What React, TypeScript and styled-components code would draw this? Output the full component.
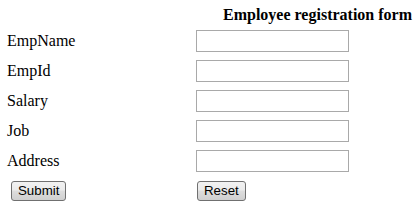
import React from "react";
import styled, { createGlobalStyle } from "styled-components";

const GlobalStyle = createGlobalStyle`
  html, body {
    margin: 0;
    padding: 0;
    background: #fff;
    font-family: "Liberation Serif", "Times New Roman", serif;
    color: #000;
  }
`;

const fields = ["EmpName", "EmpId", "Salary", "Job", "Address"];

const App: React.FC = () => {
  return (
    <>
      <GlobalStyle />
      <Form onSubmit={(e) => e.preventDefault()}>
        <Blank />
        <Title>Employee registration form</Title>
        {fields.map((name) => (
          <React.Fragment key={name}>
            <Label htmlFor={name}>{name}</Label>
            <Cell>
              <TextInput id={name} type="text" />
            </Cell>
          </React.Fragment>
        ))}
        <ButtonCell $offset={4}>
          <Button type="submit">Submit</Button>
        </ButtonCell>
        <ButtonCell $offset={1}>
          <Button type="reset">Reset</Button>
        </ButtonCell>
      </Form>
    </>
  );
};

const Form = styled.form`
  display: grid;
  grid-template-columns: 189px 1fr;
  grid-auto-rows: 22px;
  row-gap: 8px;
  align-items: center;
  padding: 0 0 0 7px;
  margin: 0;
  width: 413px;
  box-sizing: border-box;
`;

const Blank = styled.div``;

const Title = styled.div`
  align-self: start;
  margin-top: 5px;
  padding-left: 27px;
  font-size: 16px;
  line-height: 20px;
  font-weight: bold;
  white-space: nowrap;
`;

const Label = styled.label`
  font-size: 16px;
  line-height: 20px;
`;

const Cell = styled.div`
  display: flex;
  align-items: center;
`;

const TextInput = styled.input`
  width: 153px;
  height: 22px;
  box-sizing: border-box;
  border: 1px solid #a9a9a9;
  padding: 1px 2px;
  margin: 0;
  outline: none;
  font-family: "Liberation Sans", Arial, sans-serif;
  font-size: 13px;
`;

const ButtonCell = styled.div<{ $offset: number }>`
  display: flex;
  align-self: start;
  margin-top: 1px;
  padding-left: ${(p) => p.$offset}px;
`;

const Button = styled.button`
  height: 20px;
  padding: 0 6px;
  margin: 0;
  font-family: "Liberation Sans", Arial, sans-serif;
  font-size: 13.3px;
  line-height: 16px;
  color: #000;
  border: 1px solid #707070;
  border-radius: 3px;
  background: linear-gradient(#f2f2f2 0%, #ebebeb 45%, #dddddd 50%, #cfcfcf 100%);
  cursor: pointer;
`;

export default App;
